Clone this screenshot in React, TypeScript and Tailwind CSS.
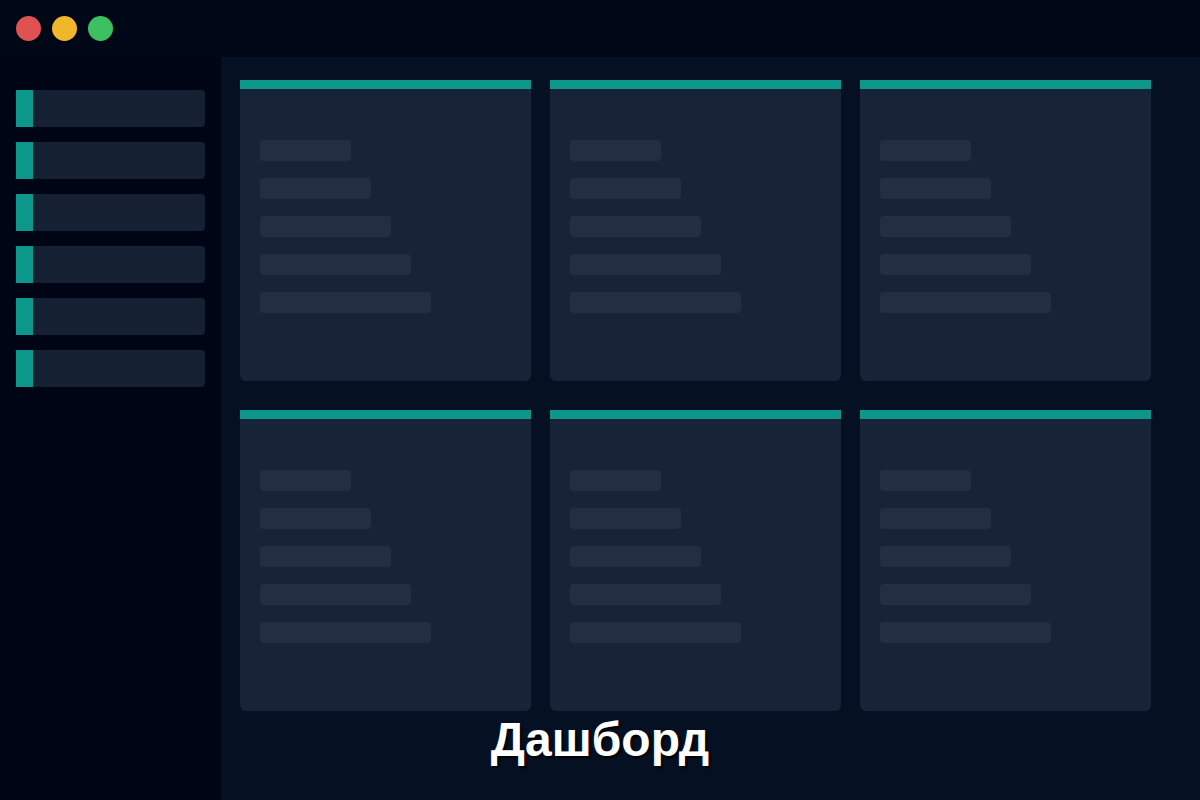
import React from 'react';

const lineWidths = ['w-[91px]', 'w-[111px]', 'w-[131px]', 'w-[151px]', 'w-[171px]'];

function SkeletonCard() {
  return (
    <div className="w-[291px] h-[301px] bg-[#172337] rounded-b-md flex flex-col">
      <div className="h-[9px] bg-[#0d968a]" />
      <div className="flex flex-col gap-[17px] px-5 pt-[51px]">
        {lineWidths.map((w, i) => (
          <div key={i} className={`${w} h-[21px] rounded bg-[#222f43]`} />
        ))}
      </div>
    </div>
  );
}

function NavItem() {
  return (
    <div className="h-[37px] w-[189px] flex bg-[#152033] rounded-r">
      <div className="w-[17px] h-full bg-[#0d968a]" />
    </div>
  );
}

export default function App() {
  return (
    <div className="relative w-[1200px] h-[800px] flex flex-col bg-[#000818] overflow-hidden" style={{ fontFamily: '"Liberation Sans", Arial, sans-serif' }}>
      {/* title bar */}
      <div className="h-[57px] flex items-center gap-[11px] px-4 shrink-0">
        <span className="w-[25px] h-[25px] rounded-full bg-[#e05252]" />
        <span className="w-[25px] h-[25px] rounded-full bg-[#f2b62a]" />
        <span className="w-[25px] h-[25px] rounded-full bg-[#3cc162]" />
      </div>

      <div className="flex flex-1 min-h-0">
        {/* sidebar */}
        <aside className="w-[221px] shrink-0 bg-[#000516] flex flex-col gap-[15px] pl-4 pt-[33px]">
          {Array.from({ length: 6 }).map((_, i) => (
            <NavItem key={i} />
          ))}
        </aside>

        {/* main */}
        <main className="flex-1 bg-[#051022] pl-[19px] pt-[23px]">
          <div className="grid grid-cols-[291px_291px_291px] gap-x-[19px] gap-y-[29px]">
            {Array.from({ length: 6 }).map((_, i) => (
              <SkeletonCard key={i} />
            ))}
          </div>
        </main>
      </div>

      {/* caption overlay */}
      <div className="absolute left-0 right-0 bottom-[36px] text-center text-white font-bold text-[48px] leading-none [text-shadow:2px_2px_2px_#000]">
        Дашборд
      </div>
    </div>
  );
}
